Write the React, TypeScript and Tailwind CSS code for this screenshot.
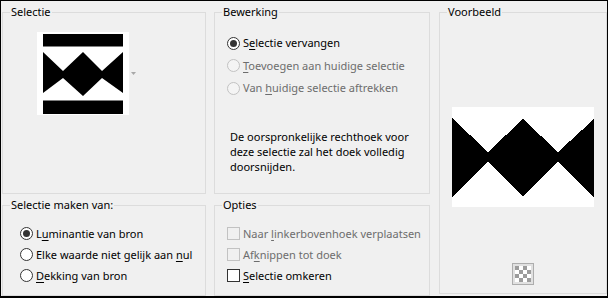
import type { ReactNode } from "react";
import clsx from "clsx";

// Mnemonic label: the key letter gets the Windows-style underline
function Label({ pre = "", k, post = "", disabled }: { pre?: string; k: string; post?: string; disabled?: boolean }) {
  return (
    <span className={clsx("whitespace-nowrap leading-4", disabled ? "text-[#6d6d6d]" : "text-black")}>
      {pre}
      <span className="underline decoration-1 underline-offset-2">{k}</span>
      {post}
    </span>
  );
}

function Radio({ checked, disabled }: { checked?: boolean; disabled?: boolean }) {
  return (
    <span
      className={clsx(
        "flex h-[13px] w-[13px] shrink-0 items-center justify-center rounded-full border",
        disabled ? "border-[#c2c2c2] bg-[#f4f4f4]" : "border-[#333333] bg-white",
      )}
    >
      {checked && <span className="h-[7px] w-[7px] rounded-full bg-[#333333]" />}
    </span>
  );
}

function Check({ disabled }: { disabled?: boolean }) {
  return (
    <span
      className={clsx(
        "h-[13px] w-[13px] shrink-0 border",
        disabled ? "border-[#c2c2c2] bg-[#f0f0f0]" : "border-[#333333] bg-white",
      )}
    />
  );
}

function Group({ title, className, children }: { title: string; className: string; children: ReactNode }) {
  return (
    <fieldset className={clsx("border border-[#dcdcdc]", className)}>
      <legend className="ml-[7px] px-[1px] leading-4 text-black">{title}</legend>
      {children}
    </fieldset>
  );
}

function Thumb() {
  return (
    <svg width="80" height="80" viewBox="0 0 80 80">
      <rect width="80" height="80" fill="#fff" />
      <rect x="0" y="0" width="80" height="12" fill="#000" />
      <rect x="0" y="12" width="80" height="1" fill="#7f7f7f" />
      <polygon points="0,18 20,37 40,18 59,37 80,18 80,59 59,44 40,62 20,44 0,59" fill="#000" />
      <rect x="0" y="66" width="80" height="1" fill="#7f7f7f" />
      <rect x="0" y="67" width="80" height="13" fill="#000" />
    </svg>
  );
}

function Preview() {
  return (
    <svg width="142" height="100" viewBox="0 0 142 100" shapeRendering="crispEdges">
      <rect width="142" height="100" fill="#fff" />
      <polygon points="0,11 36,45 71,12 106,45 142,12 142,90 106,55 71,89 36,55 0,90" fill="#000" />
    </svg>
  );
}

function Checker() {
  const cells = [];
  for (let r = 0; r < 4; r++)
    for (let c = 0; c < 4; c++)
      if ((r + c) % 2 === 0) cells.push(<rect key={`${r}-${c}`} x={c * 4} y={r * 4} width="4" height="4" fill="#9c9c9c" />);
  return (
    <div className="flex h-[22px] w-[22px] items-center justify-center border border-[#adadad] bg-[#e1e1e1]">
      <svg width="16" height="16" viewBox="0 0 16 16" shapeRendering="crispEdges">
        <rect width="16" height="16" fill="#fff" />
        {cells}
      </svg>
    </div>
  );
}

export default function App() {
  return (
    <div className="flex h-[298px] w-[608px] border-x border-t border-b-2 border-black bg-[#f0f0f0] pt-[3px] pl-[1px] font-['Noto_Sans',sans-serif] text-[11px]">
      {/* left column */}
      <div className="flex w-[204px] flex-col">
        <Group title="Selectie" className="h-[190px]">
          <div className="mt-[12px] ml-[34px] flex items-center">
            <div className="h-[83px] w-[92px] bg-white pt-[2px] pl-[6px]">
              <Thumb />
            </div>
            <svg className="ml-[2px]" width="5" height="3" viewBox="0 0 5 3">
              <polygon points="0,0 5,0 2.5,3" fill="#a8a8a8" />
            </svg>
          </div>
        </Group>
        <Group title="Selectie maken van:" className="mt-[3px] h-[99px]">
          <div className="mt-[10px] ml-[17px] flex flex-col">
            <div className="flex h-[21px] items-center gap-[3px]">
              <Radio checked />
              <Label pre="L" k="u" post="minantie van bron" />
            </div>
            <div className="flex h-[21px] items-center gap-[3px]">
              <Radio />
              <Label pre="Elke waarde niet gelijk aan " k="n" post="ul" />
            </div>
            <div className="flex h-[21px] items-center gap-[3px]">
              <Radio />
              <Label k="D" post="ekking van bron" />
            </div>
          </div>
        </Group>
      </div>

      {/* middle column */}
      <div className="ml-[8px] flex w-[216px] flex-col">
        <Group title="Bewerking" className="h-[190px]">
          <div className="mt-[12px] ml-[12px] flex flex-col">
            <div className="flex h-[22px] items-center gap-[3px]">
              <Radio checked />
              <Label pre="S" k="e" post="lectie vervangen" />
            </div>
            <div className="flex h-[23px] items-center gap-[3px]">
              <Radio disabled />
              <Label k="T" post="oevoegen aan huidige selectie" disabled />
            </div>
            <div className="flex h-[22px] items-center gap-[3px]">
              <Radio disabled />
              <Label pre="Van " k="h" post="uidige selectie aftrekken" disabled />
            </div>
          </div>
          <p className="mt-[30px] ml-[15px] leading-[15px] text-black">
            De oorspronkelijke rechthoek voor
            <br />
            deze selectie zal het doek volledig
            <br />
            doorsnijden.
          </p>
        </Group>
        <Group title="Opties" className="mt-[3px] h-[99px]">
          <div className="mt-[10px] ml-[12px] flex flex-col">
            <div className="flex h-[21px] items-center gap-[3px]">
              <Check disabled />
              <Label pre="Naar " k="l" post="inkerbovenhoek verplaatsen" disabled />
            </div>
            <div className="flex h-[21px] items-center gap-[3px]">
              <Check disabled />
              <Label pre="Af" k="k" post="nippen tot doek" disabled />
            </div>
            <div className="flex h-[21px] items-center gap-[3px]">
              <Check />
              <Label k="S" post="electie omkeren" />
            </div>
          </div>
        </Group>
      </div>

      {/* right column */}
      <Group title="Voorbeeld" className="ml-[9px] h-[290px] w-[168px]">
        <div className="flex flex-col items-center">
          <div className="mt-[87px]">
            <Preview />
          </div>
          <div className="mt-[56px]">
            <Checker />
          </div>
        </div>
      </Group>
    </div>
  );
}
